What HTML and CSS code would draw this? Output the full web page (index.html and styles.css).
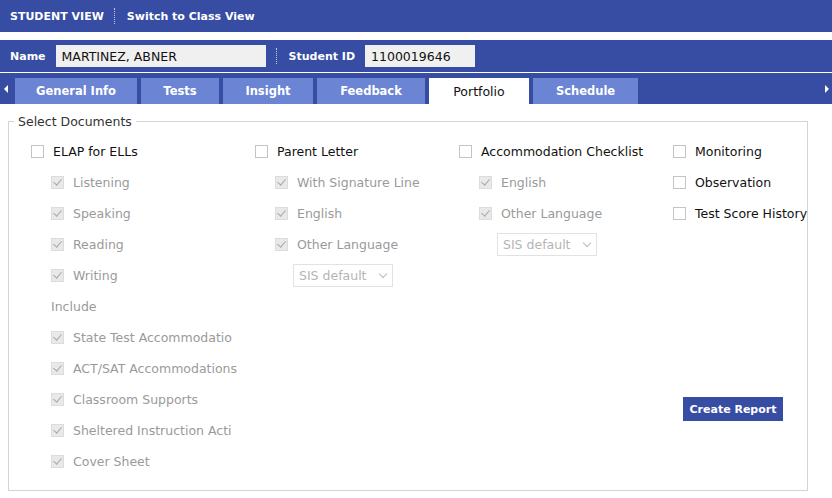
FILE: index.html
```html
<!DOCTYPE html>
<html lang="en">
<head>
  <meta charset="UTF-8">
  <title>Student Portfolio</title>
  <link rel="stylesheet" href="styles.css">
</head>
<body>
  <div class="topbar">
    <span class="topbar-title">STUDENT VIEW</span>
    <span class="sep"></span>
    <span class="topbar-link">Switch to Class View</span>
  </div>

  <div class="infobar">
    <div class="student-row">
      <span class="field-label">Name</span>
      <span class="field-box name-box">MARTINEZ, ABNER</span>
      <span class="sep"></span>
      <span class="field-label">Student ID</span>
      <span class="field-box id-box">1100019646</span>
    </div>
    <div class="tab-row">
      <span class="arrow arrow-left"></span>
      <div class="tabs">
        <span class="tab tab-general">General Info</span>
        <span class="tab tab-tests">Tests</span>
        <span class="tab tab-insight">Insight</span>
        <span class="tab tab-feedback">Feedback</span>
        <span class="tab tab-portfolio active">Portfolio</span>
        <span class="tab tab-schedule">Schedule</span>
      </div>
      <span class="arrow arrow-right"></span>
    </div>
  </div>

  <fieldset class="documents">
    <legend>Select Documents</legend>
    <div class="doc-grid">
      <div class="doc-col">
        <div class="opt"><span class="box"></span>ELAP for ELLs</div>
        <div class="opt sub"><span class="box checked"></span>Listening</div>
        <div class="opt sub"><span class="box checked"></span>Speaking</div>
        <div class="opt sub"><span class="box checked"></span>Reading</div>
        <div class="opt sub"><span class="box checked"></span>Writing</div>
        <div class="opt sub note">Include</div>
        <div class="opt sub"><span class="box checked"></span>State Test Accommodatio</div>
        <div class="opt sub"><span class="box checked"></span>ACT/SAT Accommodations</div>
        <div class="opt sub"><span class="box checked"></span>Classroom Supports</div>
        <div class="opt sub"><span class="box checked"></span>Sheltered Instruction Acti</div>
        <div class="opt sub"><span class="box checked"></span>Cover Sheet</div>
      </div>

      <div class="doc-col">
        <div class="opt"><span class="box"></span>Parent Letter</div>
        <div class="opt sub"><span class="box checked"></span>With Signature Line</div>
        <div class="opt sub"><span class="box checked"></span>English</div>
        <div class="opt sub"><span class="box checked"></span>Other Language</div>
        <div class="opt select-row"><span class="select">SIS default<span class="chev"></span></span></div>
      </div>

      <div class="doc-col">
        <div class="opt"><span class="box"></span>Accommodation Checklist</div>
        <div class="opt sub"><span class="box checked"></span>English</div>
        <div class="opt sub"><span class="box checked"></span>Other Language</div>
        <div class="opt select-row"><span class="select">SIS default<span class="chev"></span></span></div>
      </div>

      <div class="doc-col">
        <div class="opt"><span class="box"></span>Monitoring</div>
        <div class="opt"><span class="box"></span>Observation</div>
        <div class="opt"><span class="box"></span>Test Score History</div>
        <button class="create-btn" type="button">Create Report</button>
      </div>
    </div>
  </fieldset>
</body>
</html>
```

FILE: styles.css
```css
:root {
  --brand: #374ca3;
  --tab: #6b84d3;
  --muted: #9a9a9a;
  --line: #d4d4d4;
}

body {
  margin: 0;
  font-family: "DejaVu Sans", sans-serif;
  font-size: 12.5px;
  color: #111;
  background: #fff;
}

.topbar {
  display: flex;
  align-items: center;
  height: 32px;
  padding: 0 10px;
  background: var(--brand);
  color: #fff;
  font-size: 11px;
  font-weight: bold;
}

.sep {
  width: 0;
  height: 16px;
  margin: 0 12px 0 10px;
  border-left: 1px dotted rgba(255,255,255,0.7);
}

.infobar {
  margin-top: 8px;
  background: var(--brand);
}

.student-row {
  display: flex;
  align-items: center;
  height: 32px;
  padding: 0 10px;
  border-bottom: 1px solid #fff;
  color: #fff;
  font-size: 11px;
  font-weight: bold;
}

.field-label {
  margin-right: 10px;
}

.field-box {
  display: flex;
  align-items: center;
  height: 22px;
  padding: 0 6px;
  box-sizing: border-box;
  background: #f0f0f0;
  color: #111;
  font-size: 12.5px;
  font-weight: normal;
}

.name-box { width: 210px; }
.id-box { width: 110px; }

.tab-row {
  display: flex;
  align-items: flex-end;
  height: 31px;
}

.tabs {
  display: flex;
  gap: 4px;
  flex: 1;
  padding-left: 7px;
}

.tab {
  display: flex;
  align-items: center;
  justify-content: center;
  height: 26px;
  background: var(--tab);
  color: #fff;
  font-size: 11.5px;
  font-weight: bold;
}

.tab.active {
  background: #fff;
  color: #111;
  font-size: 12.5px;
  font-weight: normal;
}

.tab-general { width: 122px; }
.tab-tests { width: 78px; }
.tab-insight { width: 90px; }
.tab-feedback { width: 108px; }
.tab-portfolio { width: 100px; }
.tab-schedule { width: 105px; }

.arrow {
  align-self: center;
  width: 0;
  height: 0;
  border-top: 4px solid transparent;
  border-bottom: 4px solid transparent;
}

.arrow-left {
  margin-left: 4px;
  border-right: 4px solid #fff;
}

.arrow-right {
  margin-right: 3px;
  border-left: 4px solid #fff;
}

.documents {
  margin: 10px 24px 6px 8px;
  padding: 0 0 4px 22px;
  border: 1px solid var(--line);
  height: 377px;
  box-sizing: border-box;
}

.documents legend {
  padding: 0 4px;
  margin-left: -17px;
  color: #333;
}

.doc-grid {
  display: grid;
  grid-template-columns: 224px 204px 214px auto;
  padding-top: 7px;
}

.doc-col {
  display: flex;
  flex-direction: column;
}

.opt {
  display: flex;
  align-items: center;
  height: 31px;
  white-space: nowrap;
}

.opt.sub {
  padding-left: 20px;
  color: var(--muted);
}

.box {
  width: 11px;
  height: 11px;
  margin-right: 9px;
  border: 1px solid #c4c4c4;
  background: #fff;
  position: relative;
}

.box.checked {
  background: #e9e9e9;
  border-color: #dcdcdc;
}

.box.checked::after {
  content: "";
  position: absolute;
  left: 3px;
  top: 0px;
  width: 4px;
  height: 7px;
  border-right: 1.5px solid #a8a8a8;
  border-bottom: 1.5px solid #a8a8a8;
  transform: rotate(40deg);
}

.note {
  color: #aaa;
}

.select-row {
  padding-left: 38px;
}

.select {
  display: flex;
  align-items: center;
  justify-content: space-between;
  width: 100px;
  height: 23px;
  padding: 0 6px 0 5px;
  box-sizing: border-box;
  border: 1px solid #e2e2e2;
  color: #b5b5b5;
}

.chev {
  width: 5px;
  height: 5px;
  margin-top: -3px;
  border-right: 1.5px solid #bbb;
  border-bottom: 1.5px solid #bbb;
  transform: rotate(45deg);
}

.create-btn {
  align-self: flex-start;
  margin: 168px 0 0 10px;
  width: 100px;
  height: 24px;
  padding: 0;
  border: none;
  background: var(--brand);
  color: #fff;
  font-family: inherit;
  font-size: 11px;
  font-weight: bold;
  white-space: nowrap;
}
```
